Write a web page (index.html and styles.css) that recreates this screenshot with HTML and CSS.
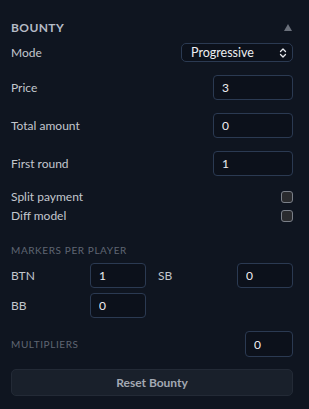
FILE: index.html
```html
<!DOCTYPE html>
<html lang="en">
<head>
  <meta charset="UTF-8" />
  <meta name="viewport" content="width=device-width, initial-scale=1" />
  <title>Bounty</title>
  <link rel="stylesheet" href="styles.css">
</head>
<body>
  <div class="panel">
    <div class="header">
      <span class="title">BOUNTY</span>
      <svg class="caret" width="8" height="7" viewBox="0 0 8 7"><path d="M4 0 L8 7 L0 7 Z" fill="#6a707b"/></svg>
    </div>

    <div class="row mode-row">
      <span class="label">Mode</span>
      <div class="select">
        <span>Progressive</span>
        <svg width="8" height="10" viewBox="0 0 8 10"><path d="M1.5 3.5 L4 1 L6.5 3.5 M1.5 6.5 L4 9 L6.5 6.5" fill="none" stroke="#e6e8ec" stroke-width="1.3" stroke-linecap="round" stroke-linejoin="round"/></svg>
      </div>
    </div>

    <div class="row field">
      <span class="label">Price</span>
      <input class="num" value="3">
    </div>
    <div class="row field">
      <span class="label">Total amount</span>
      <input class="num" value="0">
    </div>
    <div class="row field">
      <span class="label">First round</span>
      <input class="num" value="1">
    </div>

    <div class="checks">
      <label class="row check-row">
        <span class="label">Split payment</span>
        <span class="box"></span>
      </label>
      <label class="row check-row">
        <span class="label">Diff model</span>
        <span class="box"></span>
      </label>
    </div>

    <div class="section">MARKERS PER PLAYER</div>
    <div class="markers">
      <span class="label">BTN</span>
      <input class="num" value="1">
      <span class="label sb">SB</span>
      <input class="num" value="0">
      <span class="label">BB</span>
      <input class="num" value="0">
    </div>

    <div class="row multi-row">
      <span class="section">MULTIPLIERS</span>
      <input class="num small" value="0">
    </div>

    <button class="reset">Reset Bounty</button>
  </div>
</body>
</html>
```

FILE: styles.css
```css
body {
  margin: 0;
  background: #0f1520;
  font-family: "Lato", "Noto Sans", sans-serif;
  color: #c3c7ce;
}

.panel {
  padding: 16px 16px 0 11px;
}

.header {
  height: 22px;
  display: flex;
  justify-content: space-between;
  align-items: center;
}

.title {
  font-size: 12px;
  font-weight: 700;
  letter-spacing: 0.4px;
  color: #b5bbc6;
}

.caret {
  margin-right: 1px;
}

.row {
  display: flex;
  justify-content: space-between;
  align-items: center;
}

.label {
  font-size: 12px;
  color: #c3c7ce;
}

.mode-row {
  margin-top: 5px;
  height: 19px;
}

.select {
  width: 112px;
  height: 19px;
  box-sizing: border-box;
  border: 1px solid #2b3a52;
  border-radius: 5px;
  background: #0c111b;
  display: flex;
  align-items: center;
  justify-content: space-between;
  padding: 0 5px 0 9px;
  font-size: 12.5px;
  color: #eceef1;
}

.num {
  box-sizing: border-box;
  width: 80px;
  height: 25px;
  background: #0c111b;
  border: 1px solid #2b3a52;
  border-radius: 4px;
  color: #eceef1;
  font-family: inherit;
  font-size: 12px;
  padding: 0 8px;
  outline: none;
}

.field {
  margin-top: 13px;
  height: 25px;
}

.checks {
  margin-top: 11px;
}

.check-row {
  height: 19px;
}

.box {
  box-sizing: border-box;
  width: 12px;
  height: 12px;
  border: 1.5px solid #7a7f88;
  border-radius: 3px;
  background: #2a2b2e;
}

.section {
  margin-top: 19px;
  height: 12px;
  line-height: 12px;
  font-size: 10px;
  letter-spacing: 0.6px;
  color: #5f6673;
}

.markers {
  margin-top: 7px;
  display: grid;
  grid-template-columns: 79px 56px 1fr 56px;
  row-gap: 5px;
  align-items: center;
}

.markers .sb {
  padding-left: 12px;
}

.markers .num {
  width: 56px;
}

.multi-row {
  margin-top: 13px;
  height: 26px;
}

.multi-row .section {
  margin-top: 0;
}

.num.small {
  width: 48px;
  height: 26px;
}

.reset {
  display: block;
  width: 100%;
  height: 27px;
  margin-top: 12px;
  background: #19202b;
  border: 1px solid #232a36;
  border-radius: 5px;
  color: #a3a9b3;
  font-family: inherit;
  font-size: 12px;
  font-weight: 700;
}
```
